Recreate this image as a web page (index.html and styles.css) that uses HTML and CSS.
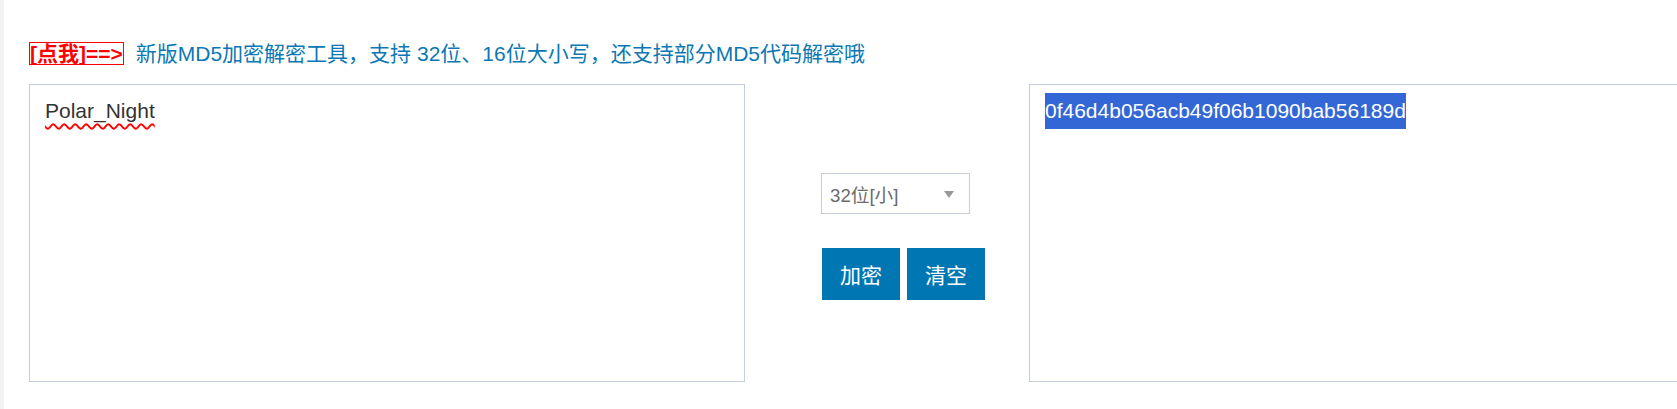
FILE: index.html
```html
<!DOCTYPE html>
<html lang="zh-CN">
<head>
<meta charset="utf-8">
<title>MD5</title>
<link rel="stylesheet" href="styles.css">
</head>
<body>
<div class="page">
  <div class="title-row">
    <span class="click-me">[点我]==&gt;</span>
    <span class="title-link">新版MD5加密解密工具，支持 32位、16位大小写，还支持部分MD5代码解密哦</span>
  </div>
  <div class="tool">
    <div class="panel">
      <span class="input-text">Polar_Night</span>
    </div>
    <div class="controls">
      <div class="select">
        <span class="select-label">32位[小]</span>
        <span class="select-arrow"></span>
      </div>
      <div class="buttons">
        <button class="btn">加密</button>
        <button class="btn">清空</button>
      </div>
    </div>
    <div class="panel panel-out">
      <span class="hash">0f46d4b056acb49f06b1090bab56189d</span>
    </div>
  </div>
</div>
</body>
</html>
```
FILE: styles.css
```css
html, body {
  margin: 0;
  padding: 0;
  background: #ffffff;
  height: 100%;
  overflow: hidden;
}
body {
  font-family: "Liberation Sans", "Noto Sans CJK SC", sans-serif;
}
.page {
  box-sizing: border-box;
  height: 409px;
  border-left: 4px solid #f2f2f2;
  padding: 42px 0 0 25px;
}
.title-row {
  display: flex;
  align-items: center;
  height: 23px;
  white-space: nowrap;
}
.click-me {
  display: inline-block;
  border: 1px solid #ff0000;
  color: #ff0000;
  font-weight: bold;
  font-size: 21px;
  line-height: 21px;
  padding: 0;
}
.title-link {
  margin-left: 12px;
  color: #0b77b4;
  font-size: 21px;
  line-height: 23px;
}
.tool {
  display: flex;
  margin-top: 19px;
  width: 1800px;
}
.panel {
  box-sizing: border-box;
  flex: 0 0 716px;
  height: 298px;
  border: 1px solid #c5cedc;
  padding: 8px 15px;
  font-size: 21px;
  line-height: 36px;
  color: #333333;
}
.input-text {
  text-decoration: underline wavy #ff0000;
  text-decoration-thickness: 1.5px;
  text-underline-offset: 5px;
}
.hash {
  display: inline-block;
  background: #3367d6;
  color: #ffffff;
  line-height: 36px;
}
.controls {
  box-sizing: border-box;
  flex: 0 0 284px;
  padding: 89px 0 0 76px;
}
.select {
  box-sizing: border-box;
  width: 149px;
  height: 41px;
  border: 1px solid #c5cdd9;
  display: flex;
  align-items: center;
  justify-content: space-between;
  padding: 0 15px 0 8px;
  background: #ffffff;
}
.select-label {
  font-size: 18.67px;
  color: #6b6b6b;
}
.select-arrow {
  width: 0;
  height: 0;
  border-left: 5px solid transparent;
  border-right: 5px solid transparent;
  border-top: 7px solid #999999;
  margin-top: 2px;
}
.buttons {
  display: flex;
  gap: 7px;
  margin-top: 34px;
  padding-left: 1px;
}
.btn {
  width: 78px;
  height: 52px;
  border: 0;
  margin: 0;
  padding: 0;
  background: #0077b3;
  color: #ffffff;
  font-family: "Liberation Sans", "Noto Sans CJK SC", sans-serif;
  font-size: 21px;
}
```
